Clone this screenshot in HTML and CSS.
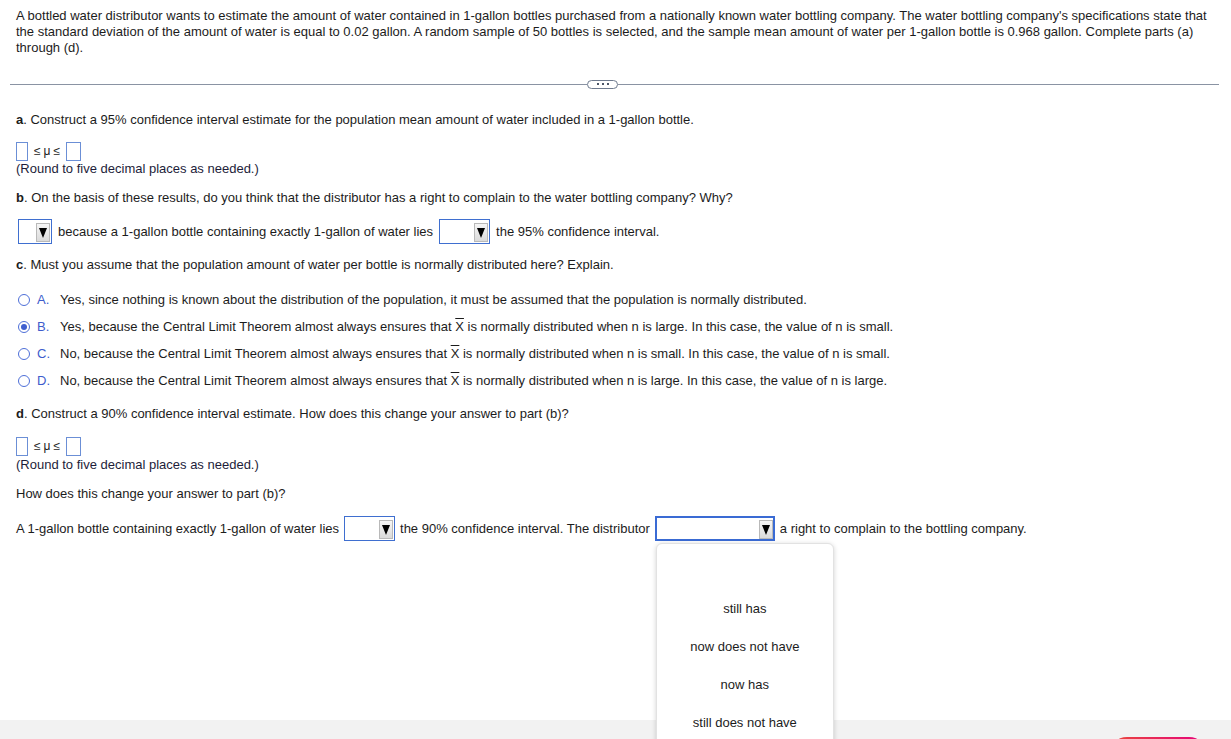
FILE: index.html
```html
<!DOCTYPE html>
<html lang="en">
<head>
  <meta charset="UTF-8" />
  <title>Question</title>
  <link rel="stylesheet" href="styles.css">
</head>
<body>
  <div class="content">
    <!-- Aufgabenstellung -->
    <p class="intro">A bottled water distributor wants to estimate the amount of water contained in 1-gallon bottles purchased from a nationally known water bottling company. The water bottling company's specifications state that the standard deviation of the amount of water is equal to 0.02 gallon. A random sample of 50 bottles is selected, and the sample mean amount of water per 1-gallon bottle is 0.968 gallon. Complete parts (a) through (d).</p>

    <div class="divider">
      <span class="line line-left"></span>
      <span class="pill"><i></i><i></i><i></i></span>
      <span class="line"></span>
    </div>

    <!-- Teil a -->
    <p class="q q-a"><b>a</b>. Construct a 95% confidence interval estimate for the population mean amount of water included in a 1-gallon bottle.</p>
    <div class="interval">
      <span class="box box-sm"></span>
      <span class="mu">≤μ≤</span>
      <span class="box"></span>
    </div>
    <p class="note">(Round to five decimal places as needed.)</p>

    <!-- Teil b -->
    <p class="q"><b>b</b>. On the basis of these results, do you think that the distributor has a right to complain to the water bottling company? Why?</p>
    <div class="fill-row">
      <span class="dd dd-xs"><span class="dd-btn"><span class="tri"></span></span></span>
      <span>because a 1-gallon bottle containing exactly 1-gallon of water lies</span>
      <span class="dd"><span class="dd-btn"><span class="tri"></span></span></span>
      <span>the 95% confidence interval.</span>
    </div>

    <!-- Teil c -->
    <p class="q"><b>c</b>. Must you assume that the population amount of water per bottle is normally distributed here? Explain.</p>
    <ul class="choices">
      <li><span class="radio"></span><span class="letter">A.</span><span>Yes, since nothing is known about the distribution of the population, it must be assumed that the population is normally distributed.</span></li>
      <li><span class="radio checked"></span><span class="letter">B.</span><span>Yes, because the Central Limit Theorem almost always ensures that <span class="xbar">X</span> is normally distributed when n is large. In this case, the value of n is small.</span></li>
      <li><span class="radio"></span><span class="letter">C.</span><span>No, because the Central Limit Theorem almost always ensures that <span class="xbar">X</span> is normally distributed when n is small. In this case, the value of n is small.</span></li>
      <li><span class="radio"></span><span class="letter">D.</span><span>No, because the Central Limit Theorem almost always ensures that <span class="xbar">X</span> is normally distributed when n is large. In this case, the value of n is large.</span></li>
    </ul>

    <!-- Teil d -->
    <p class="q q-d"><b>d</b>. Construct a 90% confidence interval estimate. How does this change your answer to part (b)?</p>
    <div class="interval interval-d">
      <span class="box box-sm"></span>
      <span class="mu">≤μ≤</span>
      <span class="box"></span>
    </div>
    <p class="note note-d">(Round to five decimal places as needed.)</p>
    <p class="q">How does this change your answer to part (b)?</p>
    <div class="fill-row fill-row-d">
      <span>A 1-gallon bottle containing exactly 1-gallon of water lies</span>
      <span class="dd"><span class="dd-btn"><span class="tri"></span></span></span>
      <span>the 90% confidence interval. The distributor</span>
      <span class="dd dd-wide focused">
        <span class="dd-btn"><span class="tri"></span></span>
        <!-- geöffnete Auswahlliste -->
        <ul class="menu">
          <li></li>
          <li>still has</li>
          <li>now does not have</li>
          <li>now has</li>
          <li>still does not have</li>
        </ul>
      </span>
      <span>a right to complain to the bottling company.</span>
    </div>
  </div>

  <div class="footer">
    <span class="btn"></span>
  </div>
</body>
</html>
```

FILE: styles.css
```css
/* --- Grundlayout --- */
html, body {
  overflow: hidden;
}
body {
  margin: 0;
  font-family: "Liberation Sans", Arial, sans-serif;
  font-size: 13px;
  line-height: 16px;
  color: #1c1c1c;
  background: #fff;
}
.content {
  height: 720px;
  box-sizing: border-box;
  padding: 8px 16px 0 16px;
}
p {
  margin: 0;
}

/* --- Trennlinie mit "..." --- */
.divider {
  display: flex;
  align-items: center;
  margin: 22px -4px 0 -6px;
  height: 12px;
}
.line {
  flex: 1;
  height: 1px;
  background: #8a93a3;
}
.line-left {
  flex: 0 0 577px;
}
.pill {
  display: flex;
  align-items: center;
  justify-content: center;
  gap: 3px;
  width: 29px;
  height: 7px;
  border: 1.5px solid #6e7a8e;
  border-radius: 6px;
  background: #fff;
}
.pill i {
  width: 2px;
  height: 2px;
  background: #4c5668;
}

/* --- Fragen --- */
.q {
  margin-top: 13px;
}
.q-a {
  margin-top: 22px;
}
.q-d {
  margin-top: 17px;
}
.q b {
  font-weight: bold;
}

/* --- Intervall-Eingabe --- */
.interval {
  display: flex;
  align-items: center;
  height: 18px;
  margin-top: 14px;
}
.interval-d {
  margin-top: 15px;
}
.box {
  display: inline-block;
  width: 13px;
  height: 17px;
  border: 1px solid #6b8fd6;
  background: #fff;
}
.box-sm {
  width: 10px;
}
.mu {
  font-size: 12px;
  letter-spacing: 3px;
  margin: 0 3px 0 6px;
}
.note {
  margin-top: 1px;
  color: #1d1d3a;
}
.note-d {
  margin-top: 2px;
}

/* --- Auswahlfelder --- */
.fill-row {
  display: flex;
  align-items: center;
  gap: 6px;
  margin-top: 13px;
  margin-left: 2px;
}
.fill-row-d {
  gap: 5px;
  margin-top: 14px;
  margin-left: 0;
}
.dd {
  position: relative;
  display: inline-flex;
  align-items: flex-end;
  justify-content: flex-end;
  width: 51px;
  height: 25px;
  box-sizing: border-box;
  padding: 1px;
  border: 1px solid #3f6fd0;
  background: #fff;
}
.dd-xs {
  width: 34px;
}
.dd-wide {
  width: 120px;
}
.focused {
  border: 2px solid #3a6bd4;
  padding: 0;
}
.dd-btn {
  display: flex;
  align-items: center;
  justify-content: center;
  width: 14px;
  height: 19px;
  box-sizing: border-box;
  border: 1px solid #b9b9b9;
  background: linear-gradient(#f6f6f6, #dadada);
}
.tri {
  width: 0;
  height: 0;
  border-left: 4.5px solid transparent;
  border-right: 4.5px solid transparent;
  border-top: 10px solid #000;
}

/* --- geöffnetes Menü --- */
.menu {
  position: absolute;
  top: calc(100% + 4px);
  left: -1px;
  z-index: 10;
  width: 176px;
  margin: 0;
  padding: 8px 0 30px 0;
  list-style: none;
  background: #fff;
  border: 1px solid #e2e2e2;
  border-radius: 6px;
  box-shadow: 0 1px 5px rgba(0, 0, 0, 0.18);
}
.menu li {
  height: 38px;
  line-height: 38px;
  text-align: center;
  color: #1c1c1c;
}

/* --- Antwortmöglichkeiten --- */
.choices {
  list-style: none;
  margin: 19px 0 0 0;
  padding: 0;
  display: flex;
  flex-direction: column;
  gap: 11px;
}
.choices li {
  display: flex;
  align-items: center;
  height: 16px;
}
.radio {
  width: 10px;
  height: 10px;
  margin-left: 2px;
  border: 1.5px solid #4e6fd8;
  border-radius: 50%;
  display: flex;
  align-items: center;
  justify-content: center;
}
.radio.checked::after {
  content: "";
  width: 6px;
  height: 6px;
  border-radius: 50%;
  background: #3f5fcf;
}
.letter {
  width: 23px;
  margin-left: 7px;
  color: #3e5ccc;
}
.xbar {
  text-decoration: overline;
}

/* --- Fußleiste --- */
.footer {
  height: 60px;
  background: #f2f2f2;
  display: flex;
  padding-top: 17px;
  box-sizing: border-box;
}
.btn {
  margin-left: auto;
  margin-right: 24px;
  width: 98px;
  height: 36px;
  border-radius: 18px;
  background: linear-gradient(90deg, #ea4a3a, #e5007d);
}
```
